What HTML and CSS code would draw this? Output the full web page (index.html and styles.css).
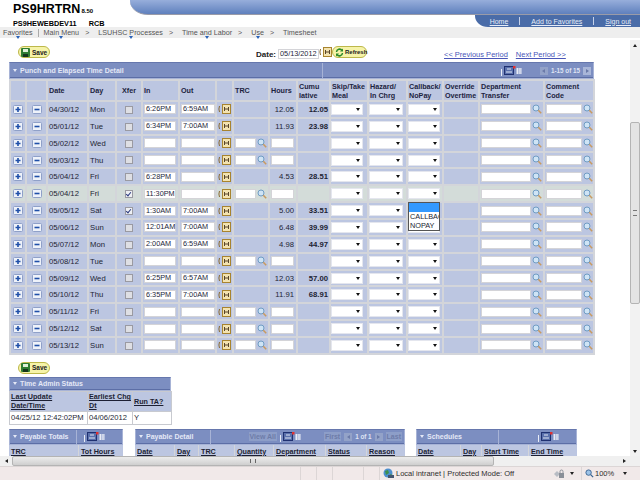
FILE: index.html
```html
<!DOCTYPE html>
<html lang="en">
<head>
    <meta charset="UTF-8">
    <title>Timesheet</title>
    <link rel="stylesheet" href="styles.css">
</head>
<body>
    <svg class="sprite" width="0" height="0">
        <symbol id="plus" viewBox="0 0 10 9"><rect x=".5" y=".5" width="9" height="8" rx="1" fill="#eef2fa" stroke="#8fa0c8"/><path d="M5 2v5M2.5 4.5h5" stroke="#1f4fa8" stroke-width="1.6"/></symbol>
        <symbol id="minus" viewBox="0 0 10 9"><rect x=".5" y=".5" width="9" height="8" rx="1" fill="#eef2fa" stroke="#8fa0c8"/><path d="M2.5 4.5h5" stroke="#1f4fa8" stroke-width="1.6"/></symbol>
        <symbol id="find" viewBox="0 0 10 10"><circle cx="4" cy="4" r="3" fill="#cfe4f5" stroke="#6f9cc4"/><path d="M6.3 6.3L9.2 9.2" stroke="#c89a60" stroke-width="1.6"/></symbol>
        <symbol id="cal" viewBox="0 0 13 10"><path d="M1.5 2Q.3 5 1.5 8" fill="none" stroke="#8a6a30"/><rect x="4.5" y=".5" width="8" height="9" fill="#f3e3b0" stroke="#a8842f"/><path d="M6.5 3v4M10.5 3v4M6.5 5h4" stroke="#59452a"/></symbol>
        <symbol id="view" viewBox="0 0 24 10"><path d="M0.5 3v7" stroke="#e8ecf6"/><rect x="3.5" y=".5" width="9" height="8" fill="#5a70ac" stroke="#1f3070"/><path d="M5 6h6M6 3h4" stroke="#dfe6f5"/><rect x="12" y="0" width="2.5" height="2.5" fill="#e03030"/><path d="M15 3h6M15 5h6M15 7h6M16.5 2v6M19 2v6" stroke="#e8ecf6"/></symbol>
        <symbol id="disk" viewBox="0 0 9 9"><rect width="9" height="9" rx="1" fill="#2f7d32"/><rect x="2" y="1" width="5" height="3" fill="#dff0d8"/><rect x="2" y="6" width="5" height="3" fill="#16351c"/></symbol>
        <symbol id="sync" viewBox="0 0 9 9"><path d="M1.5 4A3 3 0 0 1 7 2.500M7.500 5A3 3 0 0 1 2 6.500" fill="none" stroke="#2a8a2a" stroke-width="1.500"/><path d="M8 .5v3H5zM1 8.500v-3h3z" fill="#2a8a2a"/></symbol>
        <symbol id="globe" viewBox="0 0 11 11"><circle cx="5" cy="5" r="4.500" fill="#4d8fce"/><path d="M2 3l3-1 1 3-3 2zM7 6l3 1-2 3z" fill="#3f8f4c"/><rect x="5" y="7" width="6" height="3" fill="#44566f"/></symbol>
        <symbol id="lock" viewBox="0 0 11 11"><path d="M0 6l3-3 3 3-3 3z" fill="#b8bcc4"/><rect x="5" y="5" width="5" height="5" fill="#8a8f98"/><path d="M6 5V3.500a1.500 1.500 0 0 1 3 0V5" fill="none" stroke="#8a8f98"/></symbol>
        <symbol id="lens" viewBox="0 0 10 10"><circle cx="4" cy="4" r="3" fill="#9dc3e8" stroke="#34608f"/><path d="M6.300 6.300L9 9" stroke="#34608f" stroke-width="1.400"/></symbol>
    </svg>

    <!-- Top banner -->
    <div class="banner">
        <div class="brand">
            <div class="brand-db">PS9HRTRN<span class="brand-ver">8.50</span></div>
            <div class="brand-web"><span>PS9HEWEBDEV11</span><span>RCB</span></div>
        </div>
        <div class="banner-right">
            <div class="banner-blue"></div>
            <div class="toplinks">
                <a>Home</a><i></i><a>Add to Favorites</a><i></i><a>Sign out</a>
            </div>
        </div>
    </div>
    <div class="crumbs">
        <span class="crumb">Favorites</span><b class="bar"></b>
        <span class="crumb">Main Menu</span><span class="gt">&gt;</span>
        <span class="crumb">LSUHSC Processes</span><span class="gt">&gt;</span>
        <span class="crumb">Time and Labor</span><span class="gt">&gt;</span>
        <span class="crumb">Use</span><span class="gt">&gt;</span>
        <span>Timesheet</span>
    </div>

    <div class="middle">
        <div class="main">
            <div class="toolbar">
                <span class="pill save"><svg class="ic9"><use href="#disk"/></svg>Save</span>
                <label class="date-label">Date:</label>
                <span class="inp date-inp">05/13/2012</span>
                <svg class="ic-cal-small"><use href="#cal"/></svg>
                <span class="pill refresh"><svg class="ic9"><use href="#sync"/></svg>Refresh</span>
                <a class="period first">&lt;&lt; Previous Period</a>
                <a class="period">Next Period &gt;&gt;</a>
            </div>

            <div class="grid">
                <div class="titlebar">
                    <span class="title"><span class="tri"></span>Punch and Elapsed Time Detail</span>
                    <span class="title-tools">
                        <svg class="ic-view"><use href="#view"/></svg>
                        <span class="nav-arrow off left"></span>
                        <span class="count">1-15 of 15</span>
                        <span class="nav-arrow right"></span>
                    </span>
                </div>
                <table class="punch">
                    <colgroup>
                        <col class="w16"><col class="w21"><col class="w41"><col class="w28"><col class="w26"><col class="w37"><col class="w37"><col class="w17"><col class="w36"><col class="w28"><col class="w33"><col class="w38"><col class="w39"><col class="w36"><col class="w36"><col class="w65"><col class="w50">
                    </colgroup>
                    <tr class="head">
                        <th></th><th></th><th>Date</th><th>Day</th><th class="ctr">Xfer</th><th>In</th><th>Out</th><th></th><th>TRC</th><th>Hours</th><th>Cumu<br>lative</th><th>Skip/Take<br>Meal</th><th>Hazard/<br>In Chrg</th><th>Callback/<br>NoPay</th><th>Override<br>Overtime</th><th>Department<br>Transfer</th><th>Comment<br>Code</th>
                    </tr>
                    <tr>
                        <td class="ctr"><svg class="btn"><use href="#plus"/></svg></td><td class="ctr"><svg class="btn"><use href="#minus"/></svg></td><td>04/30/12</td><td>Mon</td><td class="ctr"><span class="chk"></span></td><td><span class="inp w32">6:26PM</span></td><td><span class="inp w34">6:59AM</span></td><td><svg class="ic-cal"><use href="#cal"/></svg></td><td></td><td class="num">12.05</td><td class="num bold">12.05</td><td><span class="sel w32"></span></td><td><span class="sel w34"></span></td><td><span class="sel w32"></span></td><td></td><td><span class="inp w50"></span><svg class="ic-find"><use href="#find"/></svg></td><td><span class="inp w36"></span><svg class="ic-find"><use href="#find"/></svg></td>
                    </tr>
                    <tr>
                        <td class="ctr"><svg class="btn"><use href="#plus"/></svg></td><td class="ctr"><svg class="btn"><use href="#minus"/></svg></td><td>05/01/12</td><td>Tue</td><td class="ctr"><span class="chk"></span></td><td><span class="inp w32">6:34PM</span></td><td><span class="inp w34">7:00AM</span></td><td><svg class="ic-cal"><use href="#cal"/></svg></td><td></td><td class="num">11.93</td><td class="num bold">23.98</td><td><span class="sel w32"></span></td><td><span class="sel w34"></span></td><td><span class="sel w32"></span></td><td></td><td><span class="inp w50"></span><svg class="ic-find"><use href="#find"/></svg></td><td><span class="inp w36"></span><svg class="ic-find"><use href="#find"/></svg></td>
                    </tr>
                    <tr>
                        <td class="ctr"><svg class="btn"><use href="#plus"/></svg></td><td class="ctr"><svg class="btn"><use href="#minus"/></svg></td><td>05/02/12</td><td>Wed</td><td class="ctr"><span class="chk"></span></td><td><span class="inp w32"></span></td><td><span class="inp w34"></span></td><td><svg class="ic-cal"><use href="#cal"/></svg></td><td><span class="inp w21"></span><svg class="ic-find"><use href="#find"/></svg></td><td><span class="inp w23"></span></td><td></td><td><span class="sel w32"></span></td><td><span class="sel w34"></span></td><td><span class="sel w32"></span></td><td></td><td><span class="inp w50"></span><svg class="ic-find"><use href="#find"/></svg></td><td><span class="inp w36"></span><svg class="ic-find"><use href="#find"/></svg></td>
                    </tr>
                    <tr>
                        <td class="ctr"><svg class="btn"><use href="#plus"/></svg></td><td class="ctr"><svg class="btn"><use href="#minus"/></svg></td><td>05/03/12</td><td>Thu</td><td class="ctr"><span class="chk"></span></td><td><span class="inp w32"></span></td><td><span class="inp w34"></span></td><td><svg class="ic-cal"><use href="#cal"/></svg></td><td><span class="inp w21"></span><svg class="ic-find"><use href="#find"/></svg></td><td><span class="inp w23"></span></td><td></td><td><span class="sel w32"></span></td><td><span class="sel w34"></span></td><td><span class="sel w32"></span></td><td></td><td><span class="inp w50"></span><svg class="ic-find"><use href="#find"/></svg></td><td><span class="inp w36"></span><svg class="ic-find"><use href="#find"/></svg></td>
                    </tr>
                    <tr>
                        <td class="ctr"><svg class="btn"><use href="#plus"/></svg></td><td class="ctr"><svg class="btn"><use href="#minus"/></svg></td><td>05/04/12</td><td>Fri</td><td class="ctr"><span class="chk"></span></td><td><span class="inp w32">6:28PM</span></td><td><span class="inp w34"></span></td><td><svg class="ic-cal"><use href="#cal"/></svg></td><td></td><td class="num">4.53</td><td class="num bold">28.51</td><td><span class="sel w32"></span></td><td><span class="sel w34"></span></td><td><span class="sel w32"></span></td><td></td><td><span class="inp w50"></span><svg class="ic-find"><use href="#find"/></svg></td><td><span class="inp w36"></span><svg class="ic-find"><use href="#find"/></svg></td>
                    </tr>
                    <tr class="hl">
                        <td class="ctr"><svg class="btn"><use href="#plus"/></svg></td><td class="ctr"><svg class="btn"><use href="#minus"/></svg></td><td>05/04/12</td><td>Fri</td><td class="ctr"><span class="chk on"></span></td><td><span class="inp w32">11:30PM</span></td><td><span class="inp w34"></span></td><td><svg class="ic-cal"><use href="#cal"/></svg></td><td><span class="inp w21"></span><svg class="ic-find"><use href="#find"/></svg></td><td><span class="inp w23"></span></td><td></td><td><span class="sel w32"></span></td><td><span class="sel w34"></span></td><td class="has-menu"><span class="sel w32"></span>
                            <div class="menu"><div class="opt sel-opt"></div><div class="opt">CALLBACK</div><div class="opt">NOPAY</div></div>
                        </td><td></td><td><span class="inp w50"></span><svg class="ic-find"><use href="#find"/></svg></td><td><span class="inp w36"></span><svg class="ic-find"><use href="#find"/></svg></td>
                    </tr>
                    <tr>
                        <td class="ctr"><svg class="btn"><use href="#plus"/></svg></td><td class="ctr"><svg class="btn"><use href="#minus"/></svg></td><td>05/05/12</td><td>Sat</td><td class="ctr"><span class="chk on"></span></td><td><span class="inp w32">1:30AM</span></td><td><span class="inp w34">7:00AM</span></td><td><svg class="ic-cal"><use href="#cal"/></svg></td><td></td><td class="num">5.00</td><td class="num bold">33.51</td><td><span class="sel w32"></span></td><td><span class="sel w34"></span></td><td><span class="sel w32"></span></td><td></td><td><span class="inp w50"></span><svg class="ic-find"><use href="#find"/></svg></td><td><span class="inp w36"></span><svg class="ic-find"><use href="#find"/></svg></td>
                    </tr>
                    <tr>
                        <td class="ctr"><svg class="btn"><use href="#plus"/></svg></td><td class="ctr"><svg class="btn"><use href="#minus"/></svg></td><td>05/06/12</td><td>Sun</td><td class="ctr"><span class="chk"></span></td><td><span class="inp w32">12:01AM</span></td><td><span class="inp w34">7:00AM</span></td><td><svg class="ic-cal"><use href="#cal"/></svg></td><td></td><td class="num">6.48</td><td class="num bold">39.99</td><td><span class="sel w32"></span></td><td><span class="sel w34"></span></td><td><span class="sel w32"></span></td><td></td><td><span class="inp w50"></span><svg class="ic-find"><use href="#find"/></svg></td><td><span class="inp w36"></span><svg class="ic-find"><use href="#find"/></svg></td>
                    </tr>
                    <tr>
                        <td class="ctr"><svg class="btn"><use href="#plus"/></svg></td><td class="ctr"><svg class="btn"><use href="#minus"/></svg></td><td>05/07/12</td><td>Mon</td><td class="ctr"><span class="chk"></span></td><td><span class="inp w32">2:00AM</span></td><td><span class="inp w34">6:59AM</span></td><td><svg class="ic-cal"><use href="#cal"/></svg></td><td></td><td class="num">4.98</td><td class="num bold">44.97</td><td><span class="sel w32"></span></td><td><span class="sel w34"></span></td><td><span class="sel w32"></span></td><td></td><td><span class="inp w50"></span><svg class="ic-find"><use href="#find"/></svg></td><td><span class="inp w36"></span><svg class="ic-find"><use href="#find"/></svg></td>
                    </tr>
                    <tr>
                        <td class="ctr"><svg class="btn"><use href="#plus"/></svg></td><td class="ctr"><svg class="btn"><use href="#minus"/></svg></td><td>05/08/12</td><td>Tue</td><td class="ctr"><span class="chk"></span></td><td><span class="inp w32"></span></td><td><span class="inp w34"></span></td><td><svg class="ic-cal"><use href="#cal"/></svg></td><td><span class="inp w21"></span><svg class="ic-find"><use href="#find"/></svg></td><td><span class="inp w23"></span></td><td></td><td><span class="sel w32"></span></td><td><span class="sel w34"></span></td><td><span class="sel w32"></span></td><td></td><td><span class="inp w50"></span><svg class="ic-find"><use href="#find"/></svg></td><td><span class="inp w36"></span><svg class="ic-find"><use href="#find"/></svg></td>
                    </tr>
                    <tr>
                        <td class="ctr"><svg class="btn"><use href="#plus"/></svg></td><td class="ctr"><svg class="btn"><use href="#minus"/></svg></td><td>05/09/12</td><td>Wed</td><td class="ctr"><span class="chk"></span></td><td><span class="inp w32">6:25PM</span></td><td><span class="inp w34">6:57AM</span></td><td><svg class="ic-cal"><use href="#cal"/></svg></td><td></td><td class="num">12.03</td><td class="num bold">57.00</td><td><span class="sel w32"></span></td><td><span class="sel w34"></span></td><td><span class="sel w32"></span></td><td></td><td><span class="inp w50"></span><svg class="ic-find"><use href="#find"/></svg></td><td><span class="inp w36"></span><svg class="ic-find"><use href="#find"/></svg></td>
                    </tr>
                    <tr>
                        <td class="ctr"><svg class="btn"><use href="#plus"/></svg></td><td class="ctr"><svg class="btn"><use href="#minus"/></svg></td><td>05/10/12</td><td>Thu</td><td class="ctr"><span class="chk"></span></td><td><span class="inp w32">6:35PM</span></td><td><span class="inp w34">7:00AM</span></td><td><svg class="ic-cal"><use href="#cal"/></svg></td><td></td><td class="num">11.91</td><td class="num bold">68.91</td><td><span class="sel w32"></span></td><td><span class="sel w34"></span></td><td><span class="sel w32"></span></td><td></td><td><span class="inp w50"></span><svg class="ic-find"><use href="#find"/></svg></td><td><span class="inp w36"></span><svg class="ic-find"><use href="#find"/></svg></td>
                    </tr>
                    <tr>
                        <td class="ctr"><svg class="btn"><use href="#plus"/></svg></td><td class="ctr"><svg class="btn"><use href="#minus"/></svg></td><td>05/11/12</td><td>Fri</td><td class="ctr"><span class="chk"></span></td><td><span class="inp w32"></span></td><td><span class="inp w34"></span></td><td><svg class="ic-cal"><use href="#cal"/></svg></td><td><span class="inp w21"></span><svg class="ic-find"><use href="#find"/></svg></td><td><span class="inp w23"></span></td><td></td><td><span class="sel w32"></span></td><td><span class="sel w34"></span></td><td><span class="sel w32"></span></td><td></td><td><span class="inp w50"></span><svg class="ic-find"><use href="#find"/></svg></td><td><span class="inp w36"></span><svg class="ic-find"><use href="#find"/></svg></td>
                    </tr>
                    <tr>
                        <td class="ctr"><svg class="btn"><use href="#plus"/></svg></td><td class="ctr"><svg class="btn"><use href="#minus"/></svg></td><td>05/12/12</td><td>Sat</td><td class="ctr"><span class="chk"></span></td><td><span class="inp w32"></span></td><td><span class="inp w34"></span></td><td><svg class="ic-cal"><use href="#cal"/></svg></td><td><span class="inp w21"></span><svg class="ic-find"><use href="#find"/></svg></td><td><span class="inp w23"></span></td><td></td><td><span class="sel w32"></span></td><td><span class="sel w34"></span></td><td><span class="sel w32"></span></td><td></td><td><span class="inp w50"></span><svg class="ic-find"><use href="#find"/></svg></td><td><span class="inp w36"></span><svg class="ic-find"><use href="#find"/></svg></td>
                    </tr>
                    <tr>
                        <td class="ctr"><svg class="btn"><use href="#plus"/></svg></td><td class="ctr"><svg class="btn"><use href="#minus"/></svg></td><td>05/13/12</td><td>Sun</td><td class="ctr"><span class="chk"></span></td><td><span class="inp w32"></span></td><td><span class="inp w34"></span></td><td><svg class="ic-cal"><use href="#cal"/></svg></td><td><span class="inp w21"></span><svg class="ic-find"><use href="#find"/></svg></td><td><span class="inp w23"></span></td><td></td><td><span class="sel w32"></span></td><td><span class="sel w34"></span></td><td><span class="sel w32"></span></td><td></td><td><span class="inp w50"></span><svg class="ic-find"><use href="#find"/></svg></td><td><span class="inp w36"></span><svg class="ic-find"><use href="#find"/></svg></td>
                    </tr>
                </table>
            </div>

            <div class="save-row"><span class="pill save"><svg class="ic9"><use href="#disk"/></svg>Save</span></div>

            <!-- Time Admin Status -->
            <div class="admin">
                <div class="titlebar small"><span class="title"><span class="tri"></span>Time Admin Status</span></div>
                <table class="admin-table">
                    <tr class="head link-head"><th class="a1"><u>Last Update<br>Date/Time</u></th><th class="a2"><u>Earliest Chg<br>Dt</u></th><th class="a3"><u>Run TA?</u></th></tr>
                    <tr><td>04/25/12 12:42:02PM</td><td>04/06/2012</td><td>Y</td></tr>
                </table>
            </div>

            <div class="lower">
                <div class="panel p-totals">
                    <div class="titlebar small tall"><span class="title"><span class="tri"></span>Payable Totals</span><span class="title-tools"><svg class="ic-view"><use href="#view"/></svg></span></div>
                    <div class="cols"><u class="c68">TRC</u><u>Tot Hours</u></div>
                </div>
                <div class="panel p-detail">
                    <div class="titlebar small tall">
                        <span class="title"><span class="tri"></span>Payable Detail</span>
                        <span class="title-tools">
                            <span class="ghost">View All</span>
                            <svg class="ic-view"><use href="#view"/></svg>
                            <span class="ghost">First</span><span class="nav-arrow off left"></span><span class="count">1 of 1</span><span class="nav-arrow off right"></span><span class="ghost">Last</span>
                        </span>
                    </div>
                    <div class="cols"><u class="c40">Date</u><u class="c24">Day</u><u class="c36">TRC</u><u class="c39">Quantity</u><u class="c52">Department</u><u class="c41">Status</u><u>Reason</u></div>
                </div>
                <div class="panel p-sched">
                    <div class="titlebar small tall"><span class="title"><span class="tri"></span>Schedules</span><span class="title-tools"><svg class="ic-view"><use href="#view"/></svg></span></div>
                    <div class="cols"><u class="c45">Date</u><u class="c21">Day</u><u class="c47">Start Time</u><u>End Time</u></div>
                </div>
            </div>
        </div>

        <div class="vscroll">
            <span class="sb-btn up"></span>
            <span class="sb-gap top"></span>
            <span class="sb-thumb"><i></i></span>
            <span class="sb-gap"></span>
            <span class="sb-btn down"></span>
        </div>
    </div>

    <div class="hscroll">
        <span class="hs-btn left"></span>
        <span class="hs-thumb"><i></i></span>
        <span class="hs-gap"></span>
        <span class="hs-btn right"></span>
    </div>

    <div class="status">
        <span class="cell grow"></span>
        <span class="cell w15"></span>
        <span class="cell w15"></span>
        <span class="cell w30"></span>
        <span class="cell w15"></span>
        <span class="cell zone"><svg class="ic11"><use href="#globe"/></svg>Local intranet | Protected Mode: Off</span>
        <span class="cell sec"><svg class="ic11"><use href="#lock"/></svg><b class="drop"></b></span>
        <span class="cell zoom"><svg class="ic9"><use href="#lens"/></svg>100%<b class="drop"></b></span>
    </div>
</body>
</html>
```

FILE: styles.css
```css
html, body {
    margin: 0;
    padding: 0;
    height: 100%;
    overflow: hidden;
}
body {
    display: flex;
    flex-direction: column;
    font-family: "Liberation Sans", Arial, sans-serif;
    font-size: 8px;
    color: #1c1f33;
    background: #fff;
}
.sprite {
    display: block;
    height: 0;
}

/* banner */
.banner {
    display: flex;
    height: 27px;
}
.brand {
    width: 130px;
    padding: 3px 0 0 13px;
    box-sizing: border-box;
    color: #000;
    font-weight: bold;
}
.brand-db {
    font-size: 12.5px;
    line-height: 13px;
    white-space: nowrap;
}
.brand-ver {
    font-size: 6px;
    margin-left: 1px;
}
.brand-web {
    display: flex;
    gap: 12px;
    margin-top: 2px;
    font-size: 7.3px;
    line-height: 8px;
    white-space: nowrap;
}
.banner-right {
    flex: 1;
    display: flex;
    flex-direction: column;
    align-items: flex-end;
}
.banner-blue {
    align-self: stretch;
    height: 15px;
    box-sizing: border-box;
    border-bottom: 1px solid #9a9ba8;
    border-bottom-left-radius: 18px 14px;
    background: linear-gradient(#97aedb, #5f80bd);
}
.toplinks {
    flex: 1;
    width: 165px;
    box-sizing: border-box;
    display: flex;
    align-items: center;
    justify-content: flex-end;
    padding-right: 9px;
    background: #4a6ca8;
    border-bottom-left-radius: 13px 11px;
    font-size: 7px;
}
.toplinks a {
    color: #e6ecf8;
    text-decoration: underline;
}
.toplinks i {
    width: 1px;
    height: 8px;
    margin: 0 11px;
    background: #c6d2ea;
}

/* breadcrumbs */
.crumbs {
    height: 11px;
    display: flex;
    align-items: center;
    padding-left: 3px;
    background: #eeeeee;
    color: #555;
    font-size: 7.2px;
    white-space: nowrap;
    flex-shrink: 0;
}
.crumb {
    position: relative;
}
.crumb::after {
    content: "";
    position: absolute;
    left: 50%;
    bottom: -2px;
    margin-left: -2px;
    border: 2px solid transparent;
    border-top: 3px solid #2a62b8;
    border-bottom: 0;
}
.bar {
    width: 1px;
    height: 8px;
    margin: 0 5px;
    background: #aaa;
}
.gt {
    margin: 0 9px 0 6px;
    font-size: 7px;
}

/* middle area */
.middle {
    flex: 1;
    min-height: 0;
    display: flex;
}
.main {
    width: 630px;
    overflow: hidden;
    padding-top: 8px;
    box-sizing: border-box;
}
.vscroll {
    width: 10px;
    margin-top: 2px;
    display: flex;
    flex-direction: column;
    background: #f2f2f2;
}
.sb-btn {
    height: 10px;
    display: flex;
    align-items: center;
    justify-content: center;
}
.sb-btn::after {
    content: "";
    border: 2px solid transparent;
}
.sb-btn.up::after {
    border-bottom: 3px solid #222;
    border-top: 0;
}
.sb-btn.down::after {
    border-top: 3px solid #222;
    border-bottom: 0;
}
.sb-gap {
    flex: 1;
}
.sb-gap.top {
    flex: 0 0 72px;
}
.sb-thumb {
    height: 182px;
    box-sizing: border-box;
    border: 1px solid #b4b4b4;
    border-radius: 2px;
    background: #e4e4e4;
    display: flex;
    align-items: center;
    justify-content: center;
}
.sb-thumb i {
    width: 4px;
    height: 4px;
    border-top: 1px solid #777;
    border-bottom: 1px solid #777;
}

/* toolbar */
.toolbar {
    height: 16px;
    display: flex;
    align-items: flex-start;
    padding-left: 18px;
}
.pill {
    height: 12px;
    box-sizing: border-box;
    display: inline-flex;
    align-items: center;
    gap: 2px;
    padding-left: 2px;
    border: 1px solid #bdb84a;
    border-radius: 6px;
    background: #f6f3a8;
    color: #222;
    font-size: 6.5px;
    font-weight: bold;
    white-space: nowrap;
}
.save {
    width: 32px;
}
.refresh {
    width: 35px;
    gap: 1px;
    font-size: 6px;
}
.ic9 {
    width: 9px;
    height: 9px;
    flex-shrink: 0;
}
.date-label {
    margin: 4px 2px 0 206px;
    font-size: 8px;
    font-weight: bold;
    color: #222;
}
.date-inp {
    width: 41px;
    margin-top: 3px;
    font-size: 7.6px;
}
.ic-cal-small {
    width: 13px;
    height: 10px;
    margin-top: 1px;
}
.period {
    margin-top: 4px;
    color: #4a56b8;
    text-decoration: underline;
    font-size: 7.5px;
    white-space: nowrap;
    margin-left: 8px;
}
.period.first {
    margin-left: 77px;
}

/* grid */
.grid {
    width: 585px;
    margin-left: 9px;
}
.titlebar {
    height: 17px;
    box-sizing: border-box;
    display: flex;
    align-items: center;
    justify-content: space-between;
    border: 1px solid #a7b3d6;
    border-top-color: #6677ad;
    background: #7c8ec1;
    box-shadow: inset 0 -1px 0 #5c6ea6;
}
.title {
    align-self: stretch;
    box-sizing: border-box;
    display: flex;
    align-items: center;
    gap: 3px;
    padding-left: 3px;
    border-right: 1px solid #a7b3d6;
    color: #e4e8f6;
    font-size: 7px;
    font-weight: bold;
    white-space: nowrap;
}
.grid .title { width: 313px; }
.p-totals .title { width: 67px; }
.p-detail .title { width: 75px; }
.p-sched .title { width: 82px; }
.admin .title { border-right: 0; }
.tri {
    border: 2.5px solid transparent;
    border-top: 3px solid #e4e8f6;
    border-bottom: 0;
}
.title-tools {
    display: flex;
    align-items: center;
    gap: 3px;
    padding-right: 2px;
}
.ic-view {
    width: 24px;
    height: 10px;
    margin-right: 12px;
}
.p-detail .ic-view {
    margin-right: 17px;
}
.nav-arrow {
    width: 8px;
    height: 8px;
    display: flex;
    align-items: center;
    justify-content: center;
    background: #a9b6d8;
}
.nav-arrow.off {
    background: #93a2c8;
}
.nav-arrow::after {
    content: "";
    border: 2.5px solid transparent;
}
.nav-arrow.left::after {
    border-right: 3px solid #6a7aa8;
    border-left: 0;
}
.nav-arrow.right::after {
    border-left: 3px solid #6a7aa8;
    border-right: 0;
}
.count {
    color: #dfe4f4;
    font-size: 6.3px;
    font-weight: bold;
    white-space: nowrap;
}
.punch {
    table-layout: fixed;
    width: 584px;
    border-collapse: collapse;
}
.w16 { width: 16px; }
.w21 { width: 21px; }
.w23 { width: 23px; }
.w26 { width: 26px; }
.w28 { width: 28px; }
.w32 { width: 32px; }
.w33 { width: 33px; }
.w34 { width: 34px; }
.w36 { width: 36px; }
.w37 { width: 37px; }
.w38 { width: 38px; }
.w39 { width: 39px; }
.w41 { width: 41px; }
.w50 { width: 50px; }
.w65 { width: 65px; }
.w17 { width: 17px; }
.punch td, .punch th {
    border: 2px solid #d3d5da;
    background: #bcc6e1;
    padding: 0 0 0 1px;
    overflow: visible;
    white-space: nowrap;
    text-align: left;
    vertical-align: middle;
    line-height: 9px;
    font-size: 7.7px;
}
.punch th {
    color: #1c2440;
    font-size: 7.2px;
    font-weight: bold;
}
.punch tr {
    height: 16.87px;
}
.punch tr.head {
    height: 21px;
}
.punch .ctr {
    padding: 0;
    text-align: center;
}
.punch .num {
    padding: 0 2px 0 0;
    text-align: right;
}
.punch .bold {
    font-weight: bold;
    padding-right: 1px;
}
.punch .hl td {
    background: #d3dcd9;
}
.btn {
    display: block;
    width: 10px;
    height: 9px;
    margin: auto;
}
.chk {
    display: inline-block;
    width: 8px;
    height: 8px;
    box-sizing: border-box;
    vertical-align: middle;
    border: 1px solid #9a9aa2;
    background: #dedfe4;
}
.chk.on {
    position: relative;
    background: #eef0f4;
}
.chk.on::after {
    content: "";
    position: absolute;
    left: 1px;
    top: 0;
    width: 2px;
    height: 4px;
    border: solid #2c3b80;
    border-width: 0 1px 1px 0;
    transform: rotate(40deg);
}
.inp {
    display: inline-block;
    height: 10px;
    box-sizing: border-box;
    padding-left: 1px;
    border: 1px solid #d4d4d8;
    background: #fff;
    line-height: 8px;
    vertical-align: middle;
    color: #23263a;
    font-size: 7.3px;
    white-space: nowrap;
}
.sel {
    display: inline-block;
    position: relative;
    height: 11px;
    margin-left: -1px;
    box-sizing: border-box;
    border: 1px solid #e4e6ee;
    background: #fff;
    vertical-align: middle;
}
.sel::after {
    content: "";
    position: absolute;
    right: 2px;
    top: 3px;
    border: 2px solid transparent;
    border-top: 3px solid #111;
    border-bottom: 0;
}
.ic-cal {
    display: block;
    width: 13px;
    height: 10px;
}
.ic-find {
    width: 10px;
    height: 10px;
    margin-left: 1px;
    vertical-align: middle;
}

/* dropdown open on the callback column */
.has-menu {
    position: relative;
}
.menu {
    position: absolute;
    left: 0;
    top: 16px;
    z-index: 5;
    width: 32px;
    box-sizing: border-box;
    border: 1px solid #555;
    background: #fff;
    overflow: hidden;
    font-size: 7.3px;
    line-height: 9px;
}
.opt {
    height: 9px;
    padding-left: 1px;
    white-space: nowrap;
}
.sel-opt {
    background: #3399ff;
}

.save-row {
    margin: 7px 0 4px 18px;
    height: 11px;
    display: flex;
}

/* time admin */
.admin {
    width: 162px;
    margin-left: 9px;
}
.titlebar.small {
    height: 14px;
}
.titlebar.tall {
    height: 16px;
}
.admin-table {
    width: 162px;
    table-layout: fixed;
    border-collapse: collapse;
}
.a1 { width: 78px; }
.a2 { width: 45px; }
.a3 { width: 39px; }
.admin-table th, .admin-table td {
    box-sizing: border-box;
    border: 1px solid #c8cad0;
    padding: 0 0 0 1px;
    white-space: nowrap;
    overflow: hidden;
    text-align: left;
}
.admin-table th {
    height: 20px;
    background: #bcc6e1;
    font-size: 7.2px;
    line-height: 9px;
}
.admin-table td {
    height: 13px;
    font-size: 7.6px;
}

/* lower panels, cut by the horizontal scrollbar */
.lower {
    display: flex;
    align-items: flex-start;
    margin: 4px 0 0 9px;
}
.panel {
    flex-shrink: 0;
}
.p-totals {
    width: 114px;
}
.p-detail {
    width: 270px;
    margin-left: 12px;
}
.p-sched {
    width: 161px;
    margin-left: 11px;
}
.cols {
    display: flex;
    height: 14px;
    background: #bcc6e1;
    font-size: 7.2px;
    font-weight: bold;
    white-space: nowrap;
}
.cols u {
    box-sizing: border-box;
    padding: 2px 0 0 2px;
    border-right: 1px solid #d3d5da;
}
.cols u:last-child {
    flex: 1;
    border-right: 0;
}
.c21 { width: 21px; }
.c24 { width: 24px; }
.c36 { width: 36px; }
.c39 { width: 39px; }
.c40 { width: 40px; }
.c41 { width: 41px; }
.c45 { width: 45px; }
.c47 { width: 47px; }
.c52 { width: 52px; }
.c68 { width: 70px; }
.ghost {
    padding: 1px;
    background: #8d9ec8;
    color: #6d7ca8;
    font-size: 7px;
    font-weight: bold;
}

/* horizontal scrollbar + status bar */
.hscroll {
    height: 10px;
    flex-shrink: 0;
    display: flex;
    background: #f0f0f0;
}
.hs-btn {
    width: 12px;
    display: flex;
    align-items: center;
    justify-content: center;
}
.hs-btn::after {
    content: "";
    border: 2px solid transparent;
}
.hs-btn.left::after {
    border-right: 3px solid #222;
    border-left: 0;
}
.hs-btn.right::after {
    border-left: 3px solid #222;
    border-right: 0;
}
.hs-btn.right {
    margin-right: 10px;
}
.hs-thumb {
    width: 482px;
    box-sizing: border-box;
    border: 1px solid #b4b4b4;
    border-radius: 2px;
    background: linear-gradient(#ececec, #cfcfcf);
    display: flex;
    align-items: center;
    justify-content: center;
}
.hs-thumb i {
    width: 4px;
    height: 4px;
    border-left: 1px solid #666;
    border-right: 1px solid #666;
}
.hs-gap {
    flex: 1;
}
.status {
    height: 14px;
    flex-shrink: 0;
    display: flex;
    background: #f1e9e9;
    border-top: 1px solid #dcd6d6;
    box-sizing: border-box;
    color: #2e2e2e;
    font-size: 7.5px;
}
.cell {
    display: flex;
    align-items: center;
    border-right: 1px solid #dcd6d6;
    white-space: nowrap;
}
.cell.grow { flex: 1; }
.cell.w15 { width: 15px; }
.cell.w30 { width: 30px; }
.zone {
    width: 170px;
    box-sizing: border-box;
    padding-left: 3px;
    gap: 2px;
    border-right: 0;
}
.sec {
    width: 32px;
    box-sizing: border-box;
    padding-left: 4px;
    gap: 5px;
}
.zoom {
    width: 58px;
    box-sizing: border-box;
    padding-left: 3px;
    gap: 1px;
    border-right: 0;
}
.ic11 {
    width: 11px;
    height: 11px;
    flex-shrink: 0;
}
.drop {
    border: 2px solid transparent;
    border-top: 3px solid #222;
    border-bottom: 0;
    margin-left: 8px;
}
.sec .drop {
    margin-left: 0;
}
```
